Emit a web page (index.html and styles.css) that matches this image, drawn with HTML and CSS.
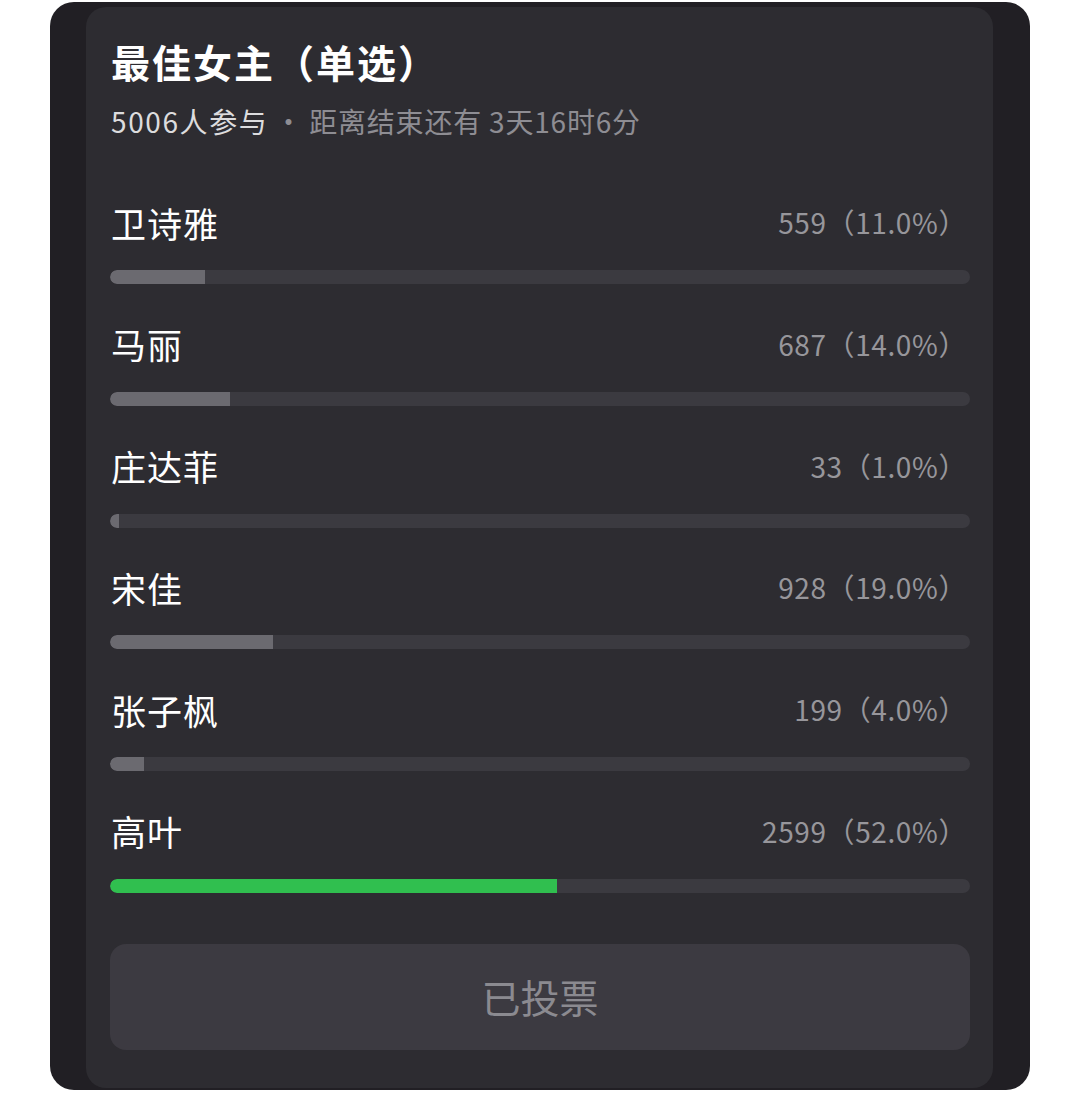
FILE: index.html
```html
<!DOCTYPE html>
<html>
	<head>
		<meta charset="utf-8" />
		<title>最佳女主（单选）</title>
		<link rel="stylesheet" href="styles.css">
	</head>
	<body>
		<div class="frame">
			<div class="card">
				<h1 class="title">最佳女主（单选）</h1>
				<p class="sub"><span class="count">5006人参与</span><span class="dot">·</span>距离结束还有 3天16时6分</p>
				<ul class="list">
					<li>
						<div class="row"><span class="name">卫诗雅</span><span class="num">559（11.0%）</span></div>
						<div class="track"><div class="fill" style="width: 11%"></div></div>
					</li>
					<li>
						<div class="row"><span class="name">马丽</span><span class="num">687（14.0%）</span></div>
						<div class="track"><div class="fill" style="width: 14%"></div></div>
					</li>
					<li>
						<div class="row"><span class="name">庄达菲</span><span class="num">33（1.0%）</span></div>
						<div class="track"><div class="fill" style="width: 1%"></div></div>
					</li>
					<li>
						<div class="row"><span class="name">宋佳</span><span class="num">928（19.0%）</span></div>
						<div class="track"><div class="fill" style="width: 19%"></div></div>
					</li>
					<li>
						<div class="row"><span class="name">张子枫</span><span class="num">199（4.0%）</span></div>
						<div class="track"><div class="fill" style="width: 4%"></div></div>
					</li>
					<li>
						<div class="row"><span class="name">高叶</span><span class="num">2599（52.0%）</span></div>
						<div class="track"><div class="fill win" style="width: 52%"></div></div>
					</li>
				</ul>
				<div class="btn">已投票</div>
			</div>
		</div>
	</body>
</html>
```

FILE: styles.css
```css
*{
	margin: 0;
	padding: 0;
	box-sizing: border-box;
}
body{
	background-color: #fff;
	font-family: "Noto Sans CJK SC", "Noto Sans", sans-serif;
}
ul li{
	list-style: none;
}
.frame{
	width: 980px;
	height: 1088px;
	margin: 2px 0 0 50px;
	padding: 5px 37px 2px 36px;
	background-color: #211f24;
	border-radius: 24px;
}
.card{
	height: 100%;
	padding: 31px 23px 0 24px;
	background-color: #2d2c31;
	border-radius: 20px;
}
.title{
	font-size: 39px;
	line-height: 46px;
	font-weight: 700;
	color: #fff;
	letter-spacing: 2px;
	padding-left: 1px;
}
.sub{
	margin-top: 17px;
	font-size: 28px;
	line-height: 40px;
	color: #8e8d93;
	letter-spacing: 0.8px;
	padding-left: 1px;
}
.count{
	color: #dcdcde;
	letter-spacing: 1.6px;
}
.dot{
	margin: 0 6px;
}
.list{
	margin-top: 61px;
}
.list li{
	height: 121.8px;
}
.row{
	display: flex;
	justify-content: space-between;
	align-items: center;
	height: 40px;
	padding: 0 3px 0 1px;
}
.name{
	font-size: 35px;
	letter-spacing: 1px;
	color: #fff;
}
.num{
	font-size: 28px;
	letter-spacing: 0.6px;
	color: #97969b;
}
.track{
	margin-top: 28px;
	height: 14px;
	border-radius: 7px;
	background-color: #3b3a40;
	overflow: hidden;
}
.fill{
	height: 100%;
	border-radius: 7px 0 0 7px;
	background-color: #6b6a70;
}
.fill.win{
	background-color: #30bf4f;
}
.btn{
	margin-top: 11px;
	height: 106px;
	border-radius: 16px;
	background-color: #3c3a41;
	color: #8b8a90;
	font-size: 39px;
	line-height: 104px;
	text-align: center;
}
```
